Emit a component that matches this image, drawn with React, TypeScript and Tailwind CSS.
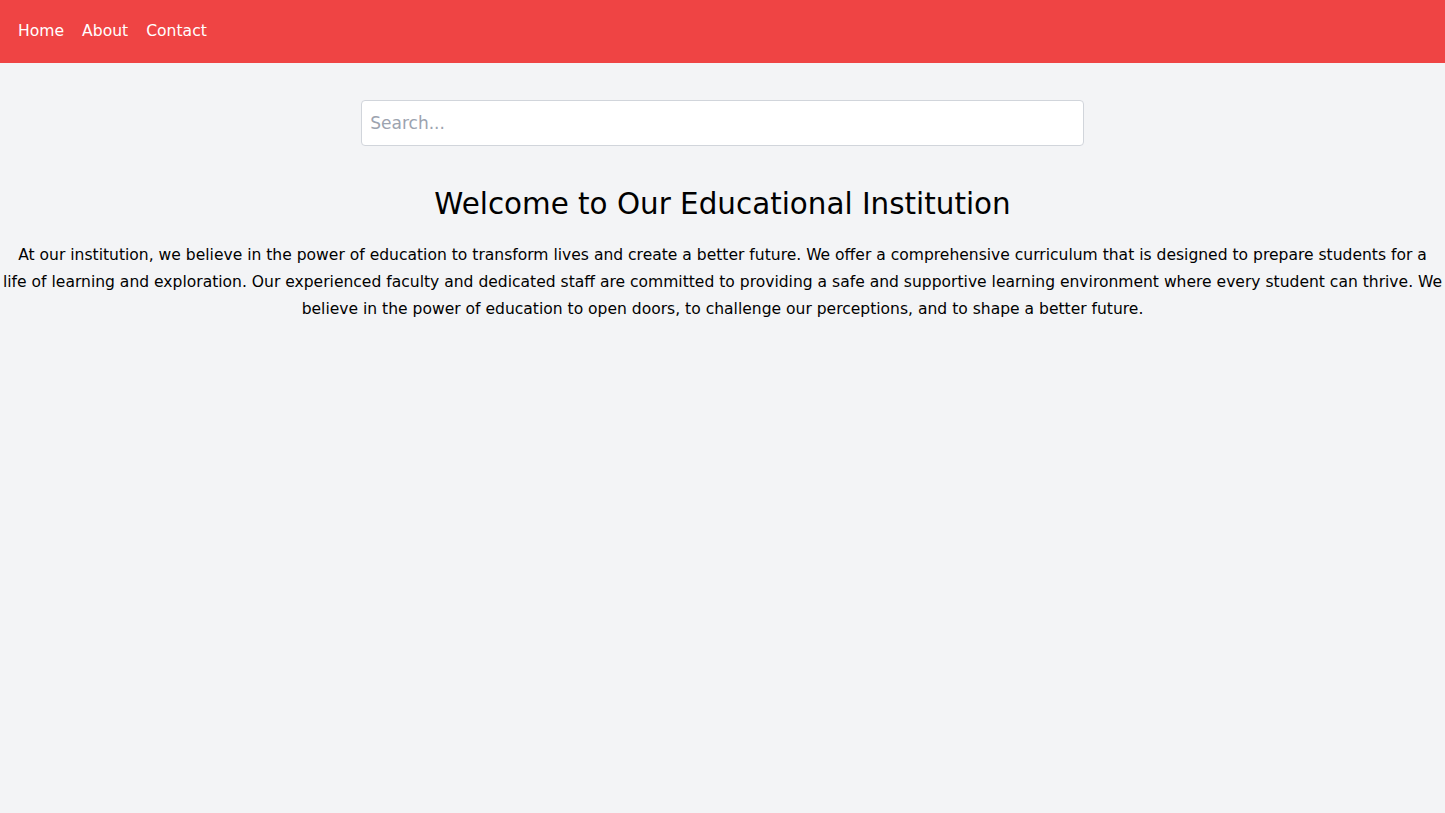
export default function App() {
  return (
    <div className="min-h-screen bg-[#f3f4f6] font-['DejaVu_Sans',sans-serif]">
      <nav className="flex h-[63px] items-center bg-[#ef4444] px-[18px]">
        <ul className="flex space-x-[18px] text-[15.6px] text-white">
          <li>
            <a href="#">Home</a>
          </li>
          <li>
            <a href="#">About</a>
          </li>
          <li>
            <a href="#">Contact</a>
          </li>
        </ul>
      </nav>
      <main className="pt-[37px]">
        <div className="flex justify-center">
          <input
            type="text"
            placeholder="Search..."
            className="h-[46px] w-1/2 rounded border border-[#d1d5db] bg-white px-2 text-[17px] text-gray-700 placeholder-[#9ca3af] outline-none"
          />
        </div>
        <h1 className="mt-10 text-center text-[29.4px] leading-9 text-black">
          Welcome to Our Educational Institution
        </h1>
        <p className="mt-5 text-center text-[15.55px] leading-[27px] text-black">
          At our institution, we believe in the power of education to transform
          lives and create a better future. We offer a comprehensive curriculum
          that is designed to prepare students for a
          <br />
          life of learning and exploration. Our experienced faculty and
          dedicated staff are committed to providing a safe and supportive
          learning environment where every student can thrive. We believe in
          the power of education to open doors, to challenge our perceptions,
          and to shape a better future.
        </p>
      </main>
    </div>
  );
}
